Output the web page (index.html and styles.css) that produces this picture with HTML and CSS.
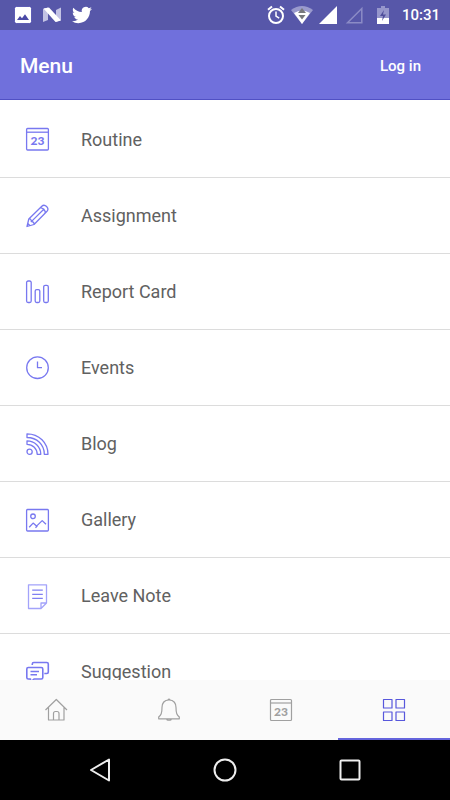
FILE: index.html
```html
<!DOCTYPE html>
<html lang="en">
<head>
<meta charset="utf-8">
<meta name="viewport" content="width=device-width, initial-scale=1">
<title>Menu</title>
<link rel="stylesheet" href="styles.css">
</head>
<body>
<div class="status">
  <div class="status-left">
    <svg width="18" height="18" viewBox="0 0 18 18"><rect x=".5" y=".5" width="17" height="17" rx="2" fill="#fff" stroke="#2b2aa0" stroke-opacity=".6"/><path d="M3 14l3-4 2 2.200 3-4 4 5.800z" fill="#4a49a6"/></svg>
    <svg width="20" height="18" viewBox="0 0 20 18"><path d="M1 3l5-1.500V14l-5 2z M14 4l5-2.500V14l-5 2z" fill="#c3c3e4"/><path d="M1.500 2.500L7 1.500l12 13-5.500 1.500z" fill="#fff"/></svg>
    <svg width="20" height="20" viewBox="0 0 24 24"><path fill="#fff" d="M23.953 4.570a10 10 0 01-2.825.775 4.958 4.958 0 002.163-2.723c-.951.555-2.005.959-3.127 1.184a4.920 4.920 0 00-8.384 4.482C7.690 8.095 4.067 6.130 1.640 3.162a4.822 4.822 0 00-.666 2.475c0 1.710.870 3.213 2.188 4.096a4.904 4.904 0 01-2.228-.616v.060a4.923 4.923 0 003.946 4.827 4.996 4.996 0 01-2.212.085 4.936 4.936 0 004.604 3.417 9.867 9.867 0 01-6.102 2.105c-.390 0-.779-.023-1.170-.067a13.995 13.995 0 007.557 2.209c9.053 0 13.998-7.496 13.998-13.985 0-.210 0-.420-.015-.630A9.935 9.935 0 0024 4.590z"/></svg>
  </div>
  <div class="status-right">
    <svg width="18" height="20" viewBox="0 0 18 20" fill="none" stroke="#fff"><circle cx="9" cy="11" r="7" stroke-width="2"/><path d="M9 6.500V11l3.200 2.200" stroke-width="1.500"/><path d="M1 4.800L5 1.500M17 4.800L13 1.500" stroke-width="2"/></svg>
    <svg width="22" height="18" viewBox="0 0 22 18"><path d="M0 4Q11-4 22 4L11 18z" fill="#9a9acd"/><path d="M3 7Q11 2 19 7L11 18z" fill="#fff"/><path d="M11 2l4 5H7zM7.500 9h7L11 13.500z" fill="#77787c"/></svg>
    <svg width="18" height="18" viewBox="0 0 18 18"><path d="M0 18L18 0v18z" fill="#fff"/></svg>
    <svg class="sim" width="18" height="18" viewBox="0 0 18 18"><path d="M2.500 16.800L16.800 2.500v14.300z" fill="none" stroke="#8b8bc6" stroke-width="1.500"/></svg>
    <svg class="battery" width="12" height="18" viewBox="0 0 12 18"><path d="M0 2h4V0h4v2h4v10H0z" fill="#9696cb"/><path d="M0 12h12v6H0z" fill="#fff"/><path d="M7 4L3 10h3l-1 5 4-6.500H6z" fill="#4f4e9b"/></svg>
    <time>10:31</time>
  </div>
</div>
<header class="bar">
  <h1>Menu</h1>
  <button type="button" class="login">Log in</button>
</header>
<main class="menu">
  <a class="item" href="#routine"><svg class="icon" viewBox="0 0 24 24"><rect x=".6" y=".5" width="21.800" height="21.500" rx="1"/><path d="M1 4.200h21"/><text class="day" x="11.500" y="17" text-anchor="middle">23</text></svg><span>Routine</span></a>
  <a class="item" href="#assignment"><svg class="icon" viewBox="0 0 24 24"><path d="M1 22.500l1.800-7.500L15.800 2.300c3-3 8 2 5.200 5L8 20.500zM2.800 15c1.500-.5 2.700.6 2.500 2.600 1.700-.2 3 1 2.700 2.900M5.300 17.600L18.300 4.800M14 4c2.600-.4 5.600 2.200 5.200 5.200M1.800 19.500l2 2"/></svg><span>Assignment</span></a>
  <a class="item" href="#report"><svg class="icon" viewBox="0 0 24 24"><rect x=".6" y="1" width="4.600" height="21.500" rx="1.500"/><rect x="9.200" y="9.600" width="4.600" height="12.900" rx="1.500"/><rect x="17.700" y="5.300" width="4.600" height="17.200" rx="1.500"/></svg><span>Report Card</span></a>
  <a class="item" href="#events"><svg class="icon" viewBox="0 0 24 24"><circle cx="11.500" cy="11.700" r="10.800"/><path d="M11.500 5.500v6.200H16"/></svg><span>Events</span></a>
  <a class="item" href="#blog"><svg class="icon" viewBox="0 0 24 24"><circle cx="3.600" cy="19.800" r="2.600"/><path d="M1 1.800C13 1.800 22 10.800 22 22.300h-3.700C18.300 12.800 11 5.500 1 5.500zM1 8.800c7.500 0 13.800 6 13.800 13.500h-3.600C11.200 16.800 6.800 12.300 1 12.300z"/></svg><span>Blog</span></a>
  <a class="item" href="#gallery"><svg class="icon" viewBox="0 0 24 24"><rect x=".6" y="1.500" width="21.800" height="21.500" rx="1"/><circle cx="7" cy="8.300" r="2.300"/><path d="M3.200 19.300l3.900-4.200 3.400 3 5.700-5.500 3.800 3.700M9.500 19.800l2-2.200"/></svg><span>Gallery</span></a>
  <a class="item" href="#leave"><svg class="icon pale" viewBox="0 0 24 24"><path d="M2.500.8h18v18.200l-5.500 5.500H2.500zM15 24.500V19h5.500"/><path class="lines" d="M6.200 6.200h10.600M6.200 10.400h10.600M6.200 14.400h10.600"/></svg><span>Leave Note</span></a>
  <a class="item" href="#suggestion"><svg class="icon bold" viewBox="0 0 24 24"><path d="M6.300 5V4q0-1.500 1.500-1.500h13q1.500 0 1.500 1.500v8q0 1.500-1.500 1.500h-2.500M2.300 7.500h13q1.500 0 1.500 1.500v8.500q0 1.500-1.500 1.500H8l-3.500 3.500V19H2.300Q.8 19 .8 17.500V9q0-1.500 1.500-1.500zM4.500 11.500h8.500M4.500 14.700h6.500"/></svg><span>Suggestion</span></a>
</main>
<nav class="tabs">
  <a href="#home" aria-label="Home"><svg class="icon" viewBox="0 0 24 24"><path d="M1.500 12L12.300 1.500 23 12M4.500 9.500V22h15.500V9.500M9.500 22v-6.500q0-2 2-2h1.500q2 0 2 2V22"/></svg></a>
  <a href="#alerts" aria-label="Notifications"><svg class="icon" viewBox="0 0 24 24"><path d="M12 2c-5 0-7 3.500-7 7.500 0 6-1 7.300-3.300 9.500v1.800h20.600V19c-2.300-2.200-3.300-3.500-3.300-9.500 0-4-2-7.500-7-7.500zM10.800 1.700q1.200-1.200 2.400 0M9.500 21.500q2.500 1.500 5 0"/></svg></a>
  <a href="#calendar" aria-label="Calendar"><svg class="icon" viewBox="0 0 24 24"><rect x="1.500" y="1.500" width="21" height="21" rx="1"/><path d="M2 5h20"/><text class="day" x="12" y="18" text-anchor="middle">23</text></svg></a>
  <a class="active" href="#menu" aria-label="Menu" aria-current="page"><svg class="icon" viewBox="0 0 24 24"><path d="M1.500 1.500h8.500v8.500h-8.500zM14 1.500h8.500v8.500H14zM1.500 14h8.500v8.500h-8.500zM14 14h8.500v8.500H14z"/></svg></a>
</nav>
<div class="system">
  <button type="button" aria-label="Back"><svg width="24" height="24" viewBox="0 0 24 24"><path d="M21 1.500v21L3 12z"/></svg></button>
  <button type="button" aria-label="Home"><svg width="24" height="24" viewBox="0 0 24 24"><circle cx="12" cy="12" r="10.500"/></svg></button>
  <button type="button" aria-label="Recent apps"><svg width="24" height="24" viewBox="0 0 24 24"><rect x="2.500" y="2.500" width="19" height="19" rx="1"/></svg></button>
</div>
</body>
</html>
```
FILE: styles.css
```css
* { box-sizing: border-box; }

body {
  margin: 0;
  height: 100vh;
  display: flex;
  flex-direction: column;
  background: #fff;
  font-family: Roboto, "Liberation Sans", sans-serif;
}

svg { display: block; flex: none; }

a { color: inherit; text-decoration: none; }

button {
  border: 0;
  padding: 0;
  background: none;
  color: inherit;
  font: inherit;
}

.status {
  flex: none;
  height: 30px;
  display: flex;
  align-items: center;
  justify-content: space-between;
  padding: 0 10px 0 14px;
  background: #5757a9;
  color: #fff;
}

.status-left { display: flex; align-items: center; gap: 10px; }

.status-right { display: flex; align-items: center; gap: 6px; }

.sim { margin-left: 2px; }

.battery { margin: 0 7px 0 8px; }

.status time {
  font-size: 15px;
  font-weight: 500;
  line-height: 20px;
}

.bar {
  flex: none;
  height: 70px;
  display: flex;
  align-items: center;
  justify-content: space-between;
  padding: 2px 29px 0 20px;
  background: #7070dc;
  border-bottom: 1px solid #5050c4;
  color: #fff;
}

.bar h1 {
  margin: 0;
  font-size: 21px;
  font-weight: 500;
  line-height: 28px;
}

.login { font-size: 15px; font-weight: 500; line-height: 20px; }

.menu {
  flex: 1;
  min-height: 0;
  overflow: hidden;
  padding-top: 2px;
}

.item {
  height: 76px;
  display: flex;
  align-items: center;
  gap: 31px;
  padding: 0 26px;
  border-bottom: 1px solid #dcdcdc;
  color: #616161;
  font-size: 18px;
  line-height: 24px;
}

.icon {
  width: 24px;
  height: 24px;
  fill: none;
  stroke: #7878f0;
  stroke-width: 1.3px;
  stroke-linejoin: round;
  overflow: visible;
}

.bold { stroke-width: 1.6px; }

.pale { stroke: #a3a3fa; }

.lines { stroke: #8080f2; }

.day {
  fill: #7878f0;
  stroke: none;
  font-family: Lato, sans-serif;
  font-size: 12px;
  font-weight: 900;
}

.tabs {
  flex: none;
  height: 60px;
  display: grid;
  grid-template-columns: repeat(4, 1fr);
  background: #fafafa;
}

.tabs a {
  display: flex;
  align-items: center;
  justify-content: center;
  border-bottom: 2px solid transparent;
  padding-top: 2px;
}

.tabs .icon { stroke: #a0a0a0; stroke-width: 1.2px; }

.tabs .day { fill: #a0a0a0; }

.tabs .active { border-color: #6464dc; }

.tabs .active .icon { stroke: #5757dc; }

.system {
  flex: none;
  height: 60px;
  display: flex;
  align-items: center;
  justify-content: center;
  gap: 101px;
  background: #000;
}

.system svg {
  fill: none;
  stroke: #eee;
  stroke-width: 2px;
  stroke-linejoin: round;
}
```
